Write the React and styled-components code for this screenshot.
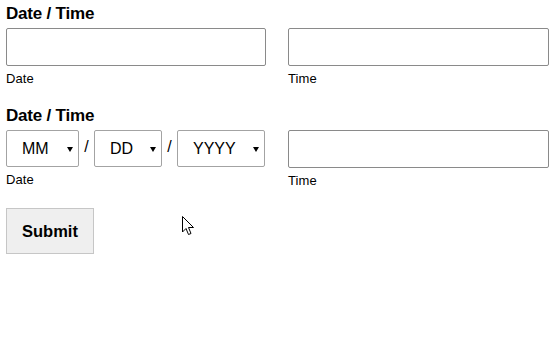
import styled, { createGlobalStyle } from "styled-components";

const GlobalStyle = createGlobalStyle`
    body {
        margin: 0;
        background: #ffffff;
        font-family: 'Liberation Sans', Arial, sans-serif;
        color: #000;
    }
`;

const Page = styled.form`
    position: relative;
    width: 555px;
    height: 342px;
    box-sizing: border-box;
    padding: 4px 7px 0 6px;
`;

const Group = styled.fieldset`
    border: none;
    margin: 0 0 20px 0;
    padding: 0;
`;

const Legend = styled.legend`
    padding: 0;
    font-size: 17px;
    line-height: 20px;
    font-weight: 700;
    letter-spacing: -0.2px;
    margin-bottom: 4px;
`;

const Row = styled.div`
    display: grid;
    grid-template-columns: 260px 261px;
    column-gap: 22px;
`;

const Field = styled.div`
    display: flex;
    flex-direction: column;
`;

const TextInput = styled.input`
    box-sizing: border-box;
    width: 100%;
    height: 38px;
    border: 1px solid #8a8a8a;
    border-radius: 2px;
    background: #fff;
    font-family: inherit;
    font-size: 16px;
    padding: 0 10px;
    margin: 0;
`;

const Hint = styled.label`
    font-size: 13px;
    line-height: 15px;
    letter-spacing: 0.1px;
    margin-top: 5px;
`;

const DateParts = styled.div`
    display: flex;
    align-items: center;
`;

const SelectWrap = styled.div`
    position: relative;
    width: ${(p) => p.$width}px;
    height: 37px;
`;

const Select = styled.select`
    appearance: none;
    box-sizing: border-box;
    width: 100%;
    height: 100%;
    border: 1px solid #a3a3a3;
    border-radius: 2px;
    background: #fff;
    font-family: inherit;
    font-size: 16px;
    color: #000;
    padding: 0 0 0 ${(p) => p.$pad}px;
    margin: 0;
`;

const Caret = styled.span`
    position: absolute;
    right: 6px;
    top: 17px;
    width: 0;
    height: 0;
    border-left: 3px solid transparent;
    border-right: 3px solid transparent;
    border-top: 5px solid #000;
    pointer-events: none;
`;

const Slash = styled.span`
    width: ${(p) => p.$width}px;
    text-align: center;
    font-size: 16px;
    margin-top: -4px;
`;

const SubmitButton = styled.button`
    box-sizing: border-box;
    width: 88px;
    height: 46px;
    margin-top: 0;
    background: #efefef;
    border: 1px solid #c6c6c6;
    font-family: inherit;
    font-size: 16.5px;
    font-weight: 700;
    color: #000;
    padding: 0;
`;

const Cursor = styled.svg`
    position: absolute;
    left: 182px;
    top: 216px;
`;

const DateSelect = ({ width, pad, label }) => (
    <SelectWrap $width={width}>
        <Select $pad={pad} defaultValue="">
            <option value="">{label}</option>
        </Select>
        <Caret />
    </SelectWrap>
);

const App = () => {
    return (
        <>
            <GlobalStyle />
            <Page onSubmit={(e) => e.preventDefault()}>
                <Group>
                    <Legend>Date / Time</Legend>
                    <Row>
                        <Field>
                            <TextInput id="date1" type="text" />
                            <Hint htmlFor="date1">Date</Hint>
                        </Field>
                        <Field>
                            <TextInput id="time1" type="text" />
                            <Hint htmlFor="time1">Time</Hint>
                        </Field>
                    </Row>
                </Group>
                <Group>
                    <Legend>Date / Time</Legend>
                    <Row>
                        <Field>
                            <DateParts>
                                <DateSelect width={73} pad={15} label="MM" />
                                <Slash $width={15}>/</Slash>
                                <DateSelect width={68} pad={15} label="DD" />
                                <Slash $width={15}>/</Slash>
                                <DateSelect width={88} pad={15} label="YYYY" />
                            </DateParts>
                            <Hint>Date</Hint>
                        </Field>
                        <Field>
                            <TextInput id="time2" type="text" />
                            <Hint htmlFor="time2">Time</Hint>
                        </Field>
                    </Row>
                </Group>
                <SubmitButton type="submit">Submit</SubmitButton>
                <Cursor width="13" height="20" viewBox="0 0 13 20">
                    <path d="M0.5 0.5 L0.5 16 L4 12.5 L6.5 18.5 L9 17.5 L6.5 11.5 L11.5 11.5 Z" fill="#fff" stroke="#000" strokeWidth="1" />
                </Cursor>
            </Page>
        </>
    );
};

export default App;
